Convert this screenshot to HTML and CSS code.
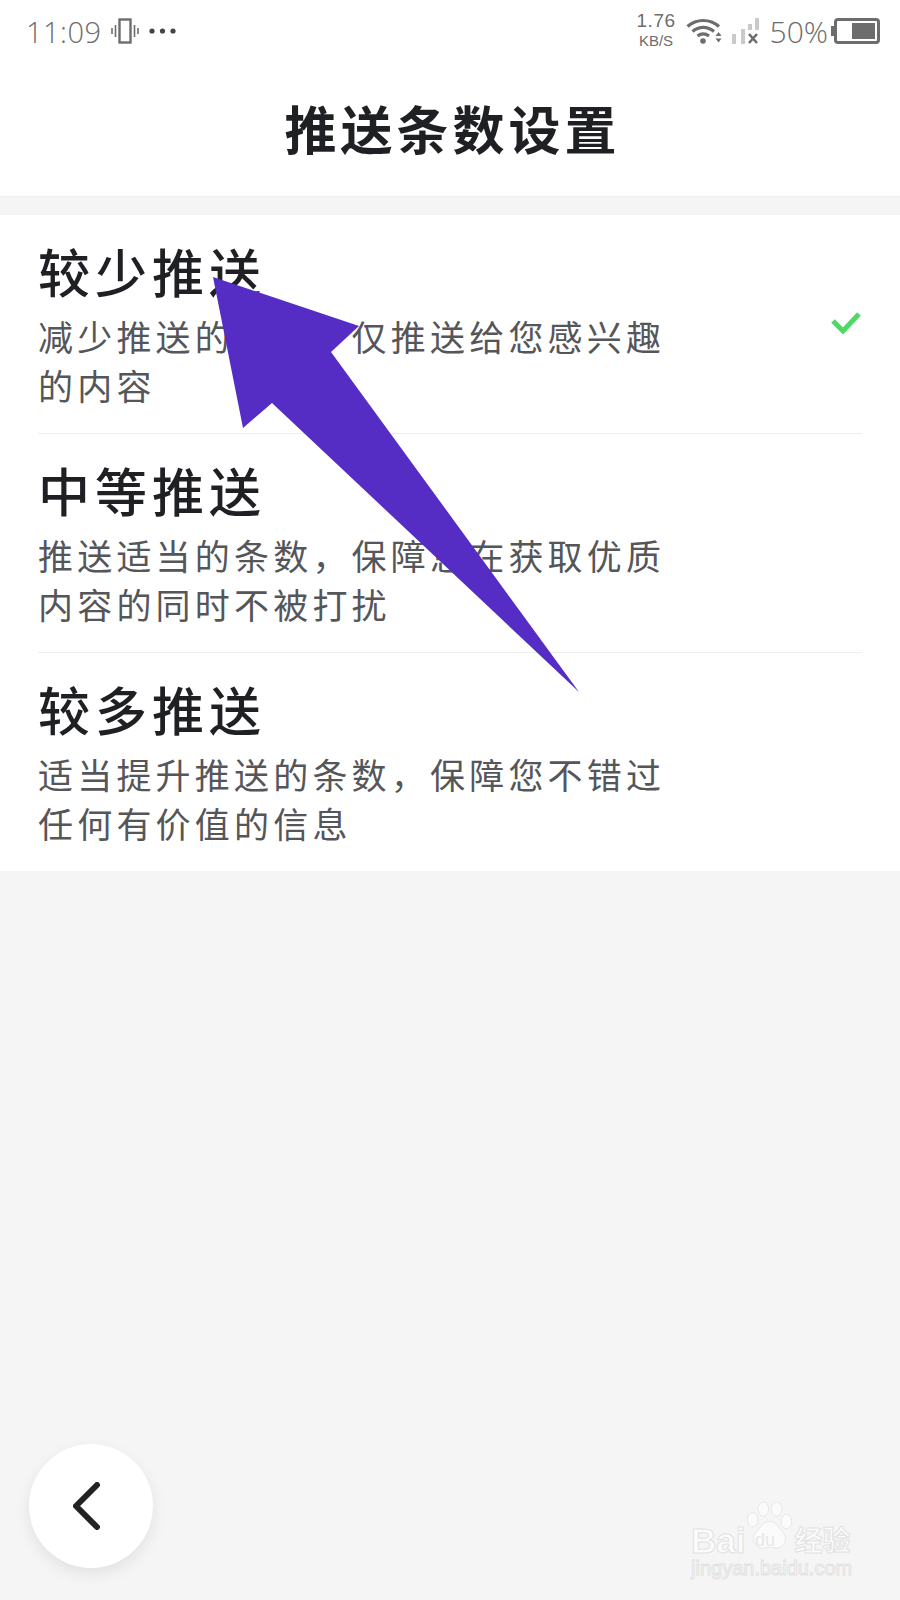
FILE: index.html
```html
<!DOCTYPE html>
<html lang="zh-CN">
<head>
    <meta charset="UTF-8">
    <meta name="viewport" content="width=device-width, initial-scale=1.0">
    <title>推送条数设置</title>
    <link rel="stylesheet" href="styles.css">
</head>
<body>
    <div class="top">
        <div class="status">
            <div class="status-left">
                <span class="time">11:09</span>
                <svg class="icon-vibrate" width="28" height="26" viewBox="0 0 28 26">
                    <rect x="8.5" y="1.5" width="11" height="23" fill="none" stroke="#6d6d6d" stroke-width="2.4"/>
                    <path d="M4.5 7v12M1 10v6M23.500 7v12M27 10v6" stroke="#6d6d6d" stroke-width="1.6"/>
                </svg>
                <svg class="icon-dots" width="27" height="6" viewBox="0 0 27 6">
                    <circle cx="3" cy="3" r="2.6" fill="#444"/>
                    <circle cx="13.5" cy="3" r="2.6" fill="#444"/>
                    <circle cx="24" cy="3" r="2.6" fill="#444"/>
                </svg>
            </div>
            <div class="status-right">
                <div class="speed">
                    <span class="speed-num">1.76</span>
                    <span class="speed-unit">KB/S</span>
                </div>
                <svg class="icon-wifi" width="37" height="26" viewBox="0 0 37 26">
                    <path d="M1.5 8.5C10.500 0.500 24 0.500 33 8.5M6.500 13.500C13 8 21.500 8 28 13.500M11.500 18C15 15.500 19.500 15.500 23 18" fill="none" stroke="#6d6d6d" stroke-width="3.2"/>
                    <circle cx="17" cy="23" r="2.8" fill="#6d6d6d"/>
                    <path d="M29.5 18l3-4 3 4zM29.5 20.500l3 4 3-4z" fill="#6d6d6d"/>
                </svg>
                <svg class="icon-signal" width="28" height="26" viewBox="0 0 28 26">
                    <rect x="1" y="16" width="4" height="10" fill="#c9c9c9"/>
                    <rect x="10" y="11" width="4" height="15" fill="#c9c9c9"/>
                    <rect x="17" y="6" width="4" height="6" fill="#c9c9c9"/>
                    <rect x="24" y="0" width="4" height="12" fill="#c9c9c9"/>
                    <path d="M18 16l8 9M26 16l-8 9" stroke="#6d6d6d" stroke-width="2.6"/>
                </svg>
                <span class="battery-text">50%</span>
                <div class="battery"><div class="battery-level"></div></div>
            </div>
        </div>
        <h1 class="title">推送条数设置</h1>
    </div>

    <div class="list">
        <div class="row">
            <div class="row-text">
                <div class="row-title">较少推送</div>
                <div class="row-desc">减少推送的条数，仅推送给您感兴趣的内容</div>
            </div>
            <svg class="check" width="32" height="24" viewBox="0 0 32 24">
                <path d="M3 10l10 10L29 3" fill="none" stroke="#4cd964" stroke-width="5"/>
            </svg>
        </div>
        <div class="row">
            <div class="row-text">
                <div class="row-title">中等推送</div>
                <div class="row-desc">推送适当的条数，保障您在获取优质内容的同时不被打扰</div>
            </div>
        </div>
        <div class="row">
            <div class="row-text">
                <div class="row-title">较多推送</div>
                <div class="row-desc">适当提升推送的条数，保障您不错过任何有价值的信息</div>
            </div>
        </div>
    </div>

    <!-- annotation drawn over the screenshot -->
    <svg class="arrow" width="900" height="720" viewBox="0 0 900 720">
        <polygon points="213,277 359,326 331,352 579,692 272,403 243,428" fill="#552dc5"/>
    </svg>

    <div class="back">
        <svg width="28" height="48" viewBox="0 0 28 48">
            <path d="M24 3L3 24l21 21" fill="none" stroke="#222" stroke-width="6" stroke-linecap="round" stroke-linejoin="round"/>
        </svg>
    </div>

    <div class="watermark">
        <div class="wm-top">
            <span class="wm-bai">Bai</span>
            <svg class="wm-paw" width="47" height="47" viewBox="0 0 50 53">
                <g fill="#fbfbfb" stroke="#e4e4e4" stroke-width="1">
                    <ellipse cx="6" cy="20" rx="6" ry="8"/>
                    <ellipse cx="18" cy="8" rx="6" ry="8"/>
                    <ellipse cx="33" cy="8" rx="6" ry="8"/>
                    <ellipse cx="44" cy="22" rx="6" ry="8"/>
                    <path d="M25 22c8 0 10 7 15 12 6 6 3 18-7 18-3 0-5-1-8-1s-5 1-8 1C7 52 4 40 10 34c5-5 7-12 15-12z"/>
                </g>
            </svg>
            <span class="wm-du">du</span>
            <span class="wm-cn">经验</span>
        </div>
        <div class="wm-url">jingyan.baidu.com</div>
    </div>
</body>
</html>
```

FILE: styles.css
```css
body {
    margin: 0;
    width: 900px;
    height: 1600px;
    position: relative;
    overflow: hidden;
    background-color: #f5f5f5;
    font-family: "Noto Sans CJK SC", "Noto Sans", sans-serif;
    color: #1f2024;
}
.top {
    background: #fff;
    height: 197px;
    border-bottom: 1px solid #efefef;
    box-sizing: border-box;
}
.status {
    height: 62px;
    display: flex;
    justify-content: space-between;
    align-items: center;
    padding: 0 20px 0 26px;
    color: #6d6d6d;
}
.status-left, .status-right {
    display: flex;
    align-items: center;
}
.time {
    font-family: "Open Sans", sans-serif;
    font-weight: 300;
    font-size: 29px;
    letter-spacing: 0.5px;
    margin-right: 9px;
}
.icon-dots {
    margin-left: 10px;
}
.speed {
    display: flex;
    flex-direction: column;
    align-items: center;
    font-family: "Liberation Sans", sans-serif;
    margin-right: 10px;
    padding-bottom: 2px;
}
.speed-num {
    font-size: 19px;
    line-height: 22px;
    letter-spacing: 0.5px;
}
.speed-unit {
    font-size: 15px;
    line-height: 18px;
}
.icon-signal {
    margin-left: 8px;
}
.battery-text {
    font-family: "Open Sans", sans-serif;
    font-weight: 300;
    font-size: 30px;
    margin-left: 11px;
    margin-right: 6px;
}
.battery {
    width: 46px;
    height: 26px;
    box-sizing: border-box;
    border: 3px solid #6d6d6d;
    border-radius: 4px;
    padding: 2px;
    display: flex;
    justify-content: flex-end;
    position: relative;
}
.battery:before {
    content: "";
    position: absolute;
    left: -6px;
    top: 5px;
    width: 3px;
    height: 10px;
    background: #6d6d6d;
}
.battery-level {
    width: 23px;
    background: #6d6d6d;
}
.title {
    margin: 0;
    height: 134px;
    line-height: 132px;
    text-align: center;
    padding-left: 5px;
    font-size: 52px;
    font-weight: 700;
    letter-spacing: 4px;
}
.list {
    margin-top: 18px;
    background: #fff;
    padding: 0 38px;
}
.row {
    height: 219px;
    box-sizing: border-box;
    border-bottom: 1px solid #eeeeee;
    display: flex;
    justify-content: space-between;
}
.row:last-child {
    border-bottom: none;
    height: 218px;
}
.row-text {
    width: 632px;
}
.row-title {
    margin-top: 23px;
    font-size: 52px;
    line-height: 66px;
    letter-spacing: 5px;
    font-weight: 500;
}
.row-desc {
    margin-top: 7px;
    font-size: 35px;
    line-height: 49px;
    letter-spacing: 4.2px;
    color: #55565a;
}
.check {
    margin-top: 96px;
}
.arrow {
    position: absolute;
    left: 0;
    top: 0;
}
.back {
    position: absolute;
    left: 29px;
    top: 1444px;
    width: 124px;
    height: 124px;
    border-radius: 50%;
    background: #fff;
    box-shadow: 0 6px 16px rgba(0, 0, 0, 0.08);
    display: flex;
    align-items: center;
    justify-content: center;
    padding-right: 8px;
    box-sizing: border-box;
}
.watermark {
    position: absolute;
    left: 691px;
    top: 1504px;
    color: #fbfbfb;
    -webkit-text-stroke: 1px #e2e2e2;
}
.wm-top {
    display: flex;
    align-items: flex-end;
    height: 54px;
    position: relative;
}
.wm-bai {
    font-family: "Liberation Sans", sans-serif;
    font-weight: 700;
    font-size: 35px;
    line-height: 35px;
}
.wm-paw {
    margin-left: 1px;
    margin-bottom: 9px;
}
.wm-du {
    position: absolute;
    left: 64px;
    bottom: 9px;
    font-family: "Liberation Sans", sans-serif;
    font-size: 18px;
    line-height: 18px;
    color: #e8e8e8;
    -webkit-text-stroke: 0;
}
.wm-cn {
    font-size: 28px;
    line-height: 30px;
    font-weight: 700;
    margin-left: 1px;
    margin-bottom: 4px;
}
.wm-url {
    font-family: "Liberation Sans", sans-serif;
    font-size: 20px;
    line-height: 20px;
}
```
